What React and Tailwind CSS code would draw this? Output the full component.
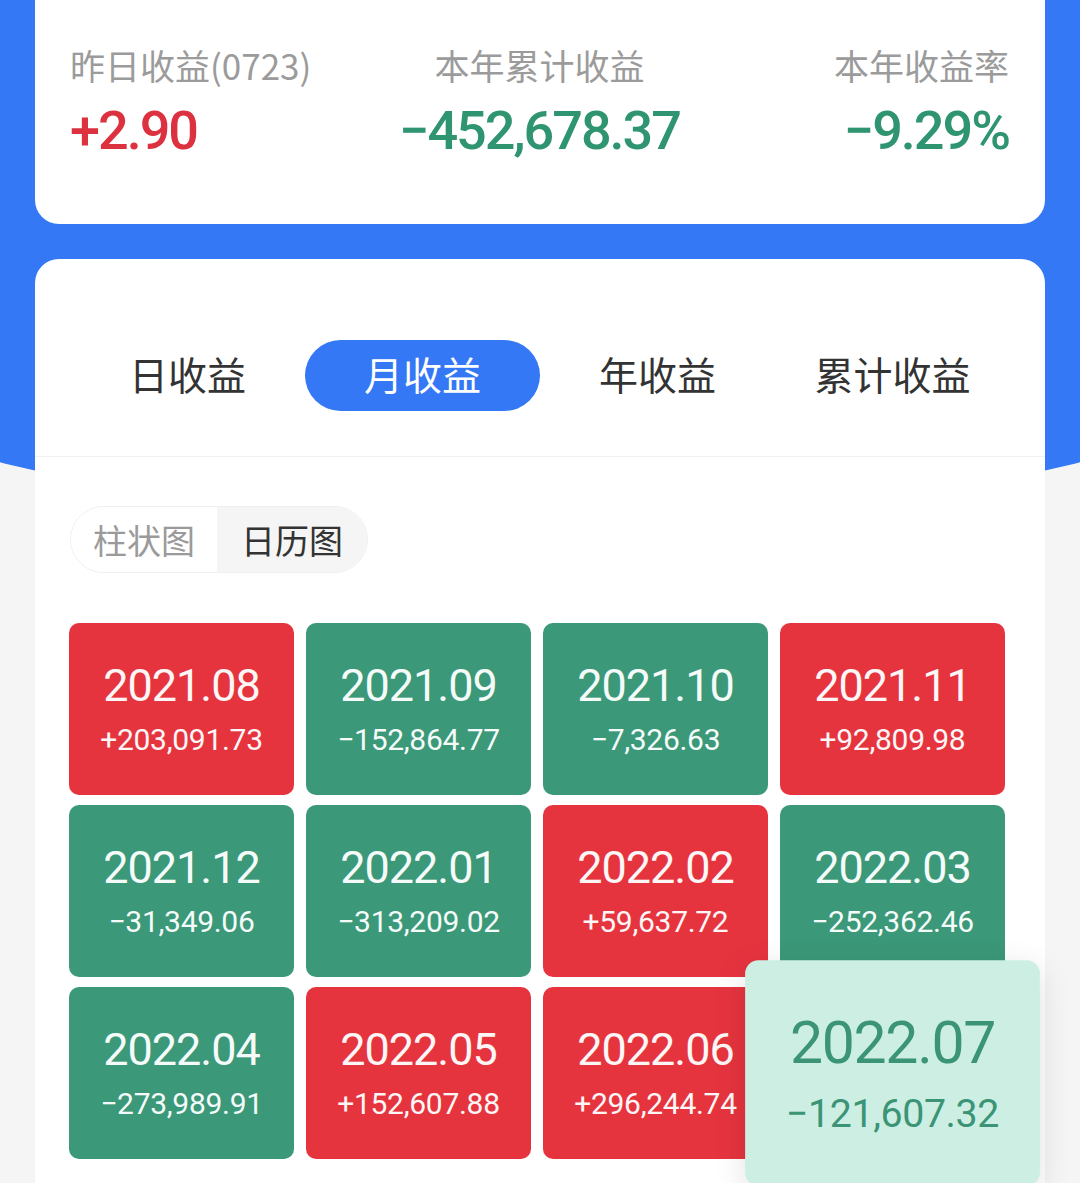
import React from 'react';

const num = { fontFamily: 'Roboto, "Liberation Sans", "Noto Sans CJK SC", sans-serif' };
const cjk = { fontFamily: '"Noto Sans CJK SC", "Noto Sans", sans-serif' };

const summary = [
  { label: '昨日收益(0723)', value: '+2.90', color: 'text-[#dc323f]', align: 'text-left' },
  { label: '本年累计收益', value: '−452,678.37', color: 'text-[#2f9470]', align: 'text-center' },
  { label: '本年收益率', value: '−9.29%', color: 'text-[#2f9470]', align: 'text-right' },
];

const tabs = ['日收益', '月收益', '年收益', '累计收益'];

const months = [
  { date: '2021.08', amount: '+203,091.73', up: true },
  { date: '2021.09', amount: '−152,864.77', up: false },
  { date: '2021.10', amount: '−7,326.63', up: false },
  { date: '2021.11', amount: '+92,809.98', up: true },
  { date: '2021.12', amount: '−31,349.06', up: false },
  { date: '2022.01', amount: '−313,209.02', up: false },
  { date: '2022.02', amount: '+59,637.72', up: true },
  { date: '2022.03', amount: '−252,362.46', up: false },
  { date: '2022.04', amount: '−273,989.91', up: false },
  { date: '2022.05', amount: '+152,607.88', up: true },
  { date: '2022.06', amount: '+296,244.74', up: true },
  { date: '2022.07', amount: '−121,607.32', up: false, active: true },
];

const MonthTile = ({ date, amount, up, active }) => {
  // current month pops out of the grid
  const tone = active
    ? 'relative z-10 scale-[1.31] bg-[#cdeee3] text-[#3a9475] shadow-[0_6px_24px_rgba(0,0,0,0.12)]'
    : up
      ? 'bg-[#e6343f] text-[#fdf6f6]'
      : 'bg-[#3b9878] text-[#f4fbf8]';

  return (
    <div className={`h-[172px] rounded-[10px] flex flex-col items-center justify-center ${tone}`} style={num}>
      <span className="text-[45px] leading-none tracking-[-1px]">{date}</span>
      <span className="mt-[17px] text-[30px] leading-none tracking-[-0.3px]">{amount}</span>
    </div>
  );
};

export default function App() {
  return (
    <div className="relative w-[1080px] h-[1183px] overflow-hidden bg-[#f5f5f5]">
      {/* blue header backdrop */}
      <div className="absolute left-[-20%] top-0 w-[140%] h-[517px] bg-[#3478f6] rounded-b-[50%_182px]" />

      <div className="relative px-[35px]">
        {/* SUMMARY CARD */}
        <div className="h-[224px] bg-white rounded-b-[24px] grid grid-cols-3 pl-[35px] pr-[36px] pt-[47px]">
          {summary.map((s) => (
            <div key={s.label} className={s.align}>
              <div className="text-[35px] leading-none text-[#9b9b9b]" style={cjk}>{s.label}</div>
              <div className={`mt-[22px] text-[54px] leading-none font-medium tracking-[-2px] ${s.color}`} style={num}>
                {s.value}
              </div>
            </div>
          ))}
        </div>

        {/* MAIN CARD */}
        <div className="mt-[35px] h-[960px] bg-white rounded-t-[24px]">
          <div className="grid grid-cols-4 px-[35px] pt-[81px] pb-[45px] border-b border-[#f2f2f2]">
            {tabs.map((t, i) => (
              <div
                key={t}
                className={`h-[71px] flex items-center justify-center pb-[4px] text-[39px] leading-none rounded-full ${
                  i === 1 ? 'bg-[#3478f6] text-white' : 'text-[#333333]'
                }`}
                style={cjk}
              >
                {t}
              </div>
            ))}
          </div>

          {/* chart type switch */}
          <div className="ml-[35px] mt-[49px] w-[298px] h-[67px] flex rounded-full overflow-hidden border border-[#efefef] text-[34px] leading-none" style={cjk}>
            <div className="w-[146px] flex items-center justify-center bg-white text-[#9a9a9a]">柱状图</div>
            <div className="flex-1 flex items-center justify-center bg-[#f5f5f5] text-[#333333]">日历图</div>
          </div>

          <div className="mt-[50px] pl-[34px] pr-[40px] grid grid-cols-4 gap-x-[12px] gap-y-[10px]">
            {months.map((m) => (
              <MonthTile key={m.date} {...m} />
            ))}
          </div>
        </div>
      </div>
    </div>
  );
}
